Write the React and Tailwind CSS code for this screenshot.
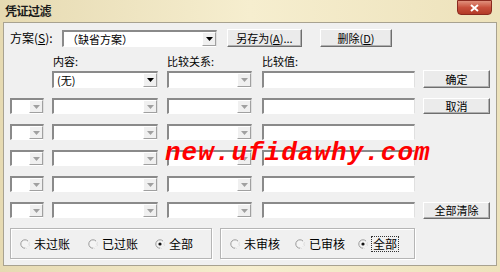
import React from "react";

const font = { fontFamily: '"Noto Sans CJK SC", "Liberation Sans", sans-serif' };

function Arrow({ dark }) {
  return (
    <div className="w-[14px] h-full flex items-center justify-center bg-[#f0f0f0] border-l border-t border-l-white border-t-white border-r border-b border-r-[#a0a0a0] border-b-[#a0a0a0]">
      <svg width="7" height="4" viewBox="0 0 7 4">
        <polygon points="0,0 7,0 3.5,4" fill={dark ? "#000" : "#a0a0a0"} />
      </svg>
    </div>
  );
}

function Combo({ w, text, dark, h = "h-[17px]" }) {
  return (
    <div className={`${w} ${h} flex bg-white border-t-2 border-l-2 border-t-[#8a8a8a] border-l-[#8a8a8a] border-b border-r border-b-white border-r-[#e0e0e0]`}>
      <div className="flex-1 pl-[3px] text-[11px] leading-[15px] text-black truncate">{text}</div>
      <Arrow dark={dark} />
    </div>
  );
}

function Field({ w, h = "h-[17px]" }) {
  return (
    <div className={`${w} ${h} bg-white border-t-2 border-l-2 border-t-[#8a8a8a] border-l-[#8a8a8a] border-b border-r border-b-white border-r-[#e0e0e0]`} />
  );
}

function Button({ w, h = "h-[18px]", children }) {
  return (
    <div className={`${w} ${h} flex items-center justify-center bg-[#ebebeb] border border-t-white border-l-white border-r-[#6e6e6e] border-b-[#6e6e6e] shadow-[inset_-1px_-1px_0_#b0b0b0] text-[11px] text-black`}>
      {children}
    </div>
  );
}

function Radio({ checked, label, w, focus }) {
  return (
    <div className={`${w} flex items-center gap-[4px]`}>
      <svg width="10" height="10" viewBox="0 0 10 10">
        <circle cx="5" cy="5" r="4.2" fill="#f4f4f4" stroke="#9a9a9a" strokeWidth="1" />
        <path d="M8 2.2 A4.2 4.2 0 0 1 5 9.2" fill="none" stroke="#f4f4f4" strokeWidth="1.4" />
        {checked && <circle cx="5" cy="5" r="1.6" fill="#111" />}
      </svg>
      <span className={`text-[12px] text-black leading-[14px] ${focus ? "outline outline-1 outline-dotted outline-[#333] px-[1px]" : ""}`}>{label}</span>
    </div>
  );
}

function Row({ small = true, content, dark, right, mt }) {
  return (
    <div className={`flex h-[16px] ${mt}`}>
      <div className="w-[34px]">{small && <Combo w="w-[34px]" h="h-[16px]" />}</div>
      <div className="ml-[8px]"><Combo w="w-[106px]" h="h-[16px]" text={content} dark={dark} /></div>
      <div className="ml-[9px]"><Combo w="w-[85px]" h="h-[16px]" /></div>
      <div className="ml-[10px]"><Field w="w-[153px]" h="h-[16px]" /></div>
      <div className="ml-[8px]">{right}</div>
    </div>
  );
}

export default function App() {
  return (
    <div className="relative w-[500px] h-[272px] overflow-hidden flex flex-col bg-gradient-to-r from-[#e6dab2] via-[#f6eecf] to-[#ede2bb]" style={font}>
      {/* TITLE BAR */}
      <div className="h-[22px] flex items-start">
        <div className="pl-[5px] pt-[4px] text-[12px] leading-[14px] font-semibold text-[#1a1a1a] tracking-[-0.5px]">凭证过滤</div>
        <div className="ml-auto mr-[8px] w-[35px] h-[15px] rounded-b-[4px] border border-[#8a2a20] bg-gradient-to-b from-[#e0907c] via-[#c8503c] to-[#b23a28] flex items-center justify-center">
          <svg width="9" height="8" viewBox="0 0 9 8">
            <path d="M1 1 L8 7 M8 1 L1 7" stroke="#fff" strokeWidth="2" />
          </svg>
        </div>
      </div>

      {/* BODY */}
      <div className="mx-[3px] h-[244px] bg-[#f0f0f0] border border-[#a8a290] pl-[6px] pt-[6px] flex flex-col">
        {/* SCHEME */}
        <div className="flex items-center h-[18px]">
          <div className="w-[52px] text-[12px] text-black">方案(<span className="underline">S</span>):</div>
          <Combo w="w-[155px]" text="（缺省方案）" dark />
          <div className="ml-[10px]"><Button w="w-[75px]">另存为(<span className="underline">A</span>)...</Button></div>
          <div className="ml-[18px]"><Button w="w-[72px]">删除(<span className="underline">D</span>)</Button></div>
        </div>

        {/* LABELS */}
        <div className="flex mt-[7px] h-[14px] text-[11px] leading-[14px] text-black">
          <div className="w-[34px]" />
          <div className="ml-[9px] w-[105px]">内容:</div>
          <div className="ml-[9px] w-[85px]">比较关系:</div>
          <div className="ml-[10px]">比较值:</div>
        </div>

        {/* CONDITIONS */}
        <div className="flex h-[17px] mt-[3px]">
          <div className="w-[34px]" />
          <div className="ml-[8px]"><Combo w="w-[106px]" text="(无)" dark /></div>
          <div className="ml-[9px]"><Combo w="w-[85px]" /></div>
          <div className="ml-[10px]"><Field w="w-[153px]" /></div>
          <div className="ml-[8px] -mt-[1px]"><Button w="w-[67px]">确定</Button></div>
        </div>
        <Row mt="mt-[10px]" right={<Button w="w-[67px]" h="h-[16px]">取消</Button>} />
        <Row mt="mt-[10px]" />
        <Row mt="mt-[10px]" />
        <Row mt="mt-[10px]" />
        <Row mt="mt-[10px]" right={<Button w="w-[67px]" h="h-[17px]">全部清除</Button>} />

        {/* STATUS GROUPS */}
        <div className="flex mt-[10px]">
          <div className="w-[202px] h-[31px] border border-[#b5b5b5] shadow-[inset_1px_1px_0_#fff,1px_1px_0_#fff] flex items-center pl-[9px]">
            <Radio w="w-[68px]" label="未过账" />
            <Radio w="w-[67px]" label="已过账" />
            <Radio label="全部" checked />
          </div>
          <div className="ml-[8px] w-[195px] h-[31px] border border-[#b5b5b5] shadow-[inset_1px_1px_0_#fff,1px_1px_0_#fff] flex items-center pl-[9px]">
            <Radio w="w-[65px]" label="未审核" />
            <Radio w="w-[63px]" label="已审核" />
            <Radio label="全部" checked focus />
          </div>
        </div>
      </div>

      {/* WATERMARK */}
      <div className="absolute left-[165px] top-[137px] text-[26px] leading-[32px] font-bold italic text-[#ff0000] tracking-[1px]" style={{ fontFamily: '"Liberation Mono", monospace' }}>
        new.ufidawhy.com
      </div>
    </div>
  );
}
